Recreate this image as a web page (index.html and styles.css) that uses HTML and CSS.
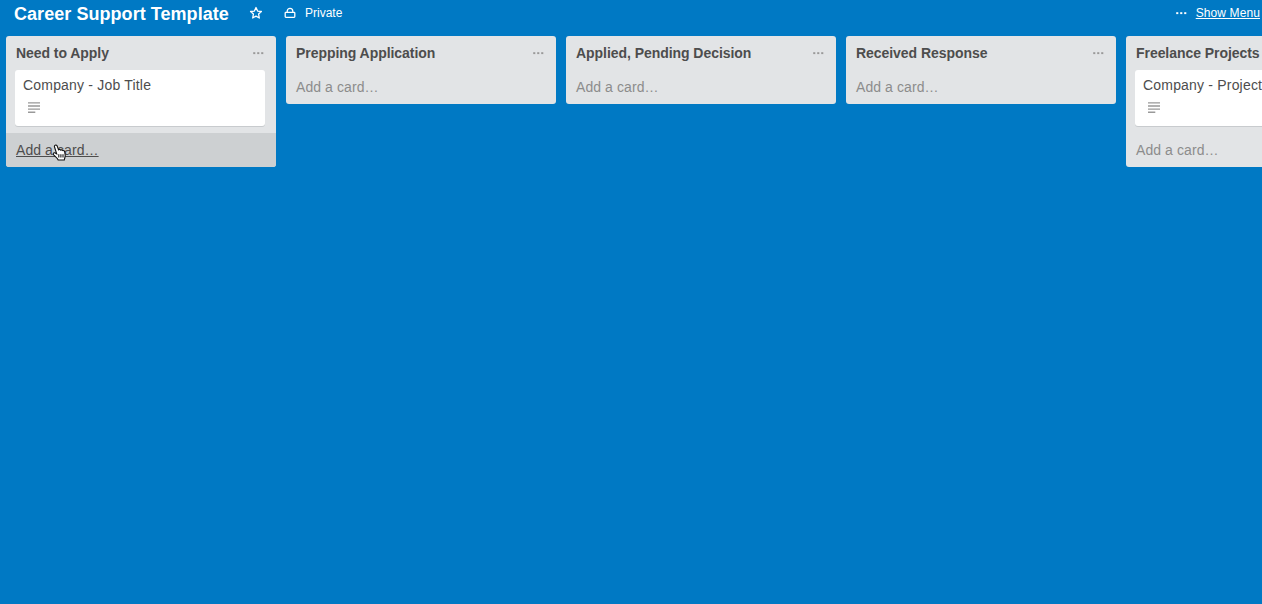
FILE: index.html
```html
<!DOCTYPE html>
<html lang="en">
<head>
<meta charset="utf-8">
<title>Career Support Template</title>
<link rel="stylesheet" href="styles.css">
</head>
<body>
<svg class="symbols" aria-hidden="true">
  <symbol id="dots" viewBox="0 0 11 3"><rect x="0.2" y="0.2" width="2.1" height="1.9"/><rect x="4.2" y="0.2" width="2.1" height="1.9"/><rect x="8.2" y="0.2" width="2.1" height="1.9"/></symbol>
  <symbol id="lines" viewBox="0 0 12 11"><path d="M0 .9H12M0 4H12M0 7.1H12M0 10.2H7.3" stroke="currentColor" stroke-width="1.4"/></symbol>
</svg>
<header class="board-header">
  <h1 class="board-title">Career Support Template</h1>
  <svg class="star" viewBox="0 0 14 14"><path d="M7 1.5 8.6 5.1 12.4 5.5 9.6 8.1 10.3 12 7 10.1 3.7 12 4.4 8.1 1.6 5.5 5.4 5.1Z"/></svg>
  <svg class="lock" viewBox="0 0 12 12"><rect x="1.2" y="5.3" width="9.6" height="5" rx=".7"/><path d="M3.2 5.1V4.2a2.8 2.9 0 0 1 5.6 0v.9"/></svg>
  <span class="privacy">Private</span>
  <svg class="dots menu-dots"><use href="#dots"/></svg>
  <a class="show-menu">Show Menu</a>
</header>
<main class="board">
  <section class="list">
    <div class="list-header"><h2 class="list-title">Need to Apply</h2><svg class="dots"><use href="#dots"/></svg></div>
    <div class="cards"><article class="card"><div class="card-title">Company - Job Title</div><svg class="description"><use href="#lines"/></svg></article></div>
    <a class="add-card hovered"><span class="add-label">Add a card…</span>
      <svg class="pointer" viewBox="0 0 15 18"><path d="M3.2 1.2C4.2.8 5 1.4 5.3 2.3L6.5 5.8C7.1 5.2 8.2 5.3 8.6 6.1 9.3 5.6 10.3 5.8 10.7 6.6 11.6 6.3 12.5 6.8 12.7 7.8L13.2 11.2C13.4 12.9 12.5 14.2 12.3 16H6.2C5.5 14 3.3 12.7 1.7 10.9.7 9.7 1.5 8.6 2.7 8.8L4.7 9.8 2.6 3.3C2.2 2.3 2.4 1.5 3.2 1.2Z"/><path d="M6.8 10.3V13.5M8.9 10.3V13.5M11 10.3V13.5"/></svg>
    </a>
  </section>
  <section class="list">
    <div class="list-header"><h2 class="list-title">Prepping Application</h2><svg class="dots"><use href="#dots"/></svg></div>
    <a class="add-card"><span class="add-label">Add a card…</span></a>
  </section>
  <section class="list">
    <div class="list-header"><h2 class="list-title">Applied, Pending Decision</h2><svg class="dots"><use href="#dots"/></svg></div>
    <a class="add-card"><span class="add-label">Add a card…</span></a>
  </section>
  <section class="list">
    <div class="list-header"><h2 class="list-title">Received Response</h2><svg class="dots"><use href="#dots"/></svg></div>
    <a class="add-card"><span class="add-label">Add a card…</span></a>
  </section>
  <section class="list">
    <div class="list-header"><h2 class="list-title">Freelance Projects</h2></div>
    <div class="cards"><article class="card"><div class="card-title">Company - Project</div><svg class="description"><use href="#lines"/></svg></article></div>
    <a class="add-card"><span class="add-label">Add a card…</span></a>
  </section>
</main>
</body>
</html>
```
FILE: styles.css
```css
* { box-sizing: border-box; }
body { margin: 0; height: 604px; overflow: hidden; background: #0079c4; color: #4d4d4d; font-family: "Liberation Sans", Arial, sans-serif; }
svg { display: block; flex: none; }
.symbols { position: absolute; width: 0; height: 0; }
.board-header { display: flex; align-items: center; height: 26px; margin-bottom: 10px; padding: 0 2px 0 14px; color: #fff; white-space: nowrap; }
.board-title { width: 215px; margin: 0 20px 0 0; padding-top: 2px; font-size: 18px; line-height: 26px; letter-spacing: .05px; }
.star { width: 14px; height: 14px; margin-right: 21px; fill: none; stroke: #fff; stroke-width: 1.3; stroke-linejoin: round; }
.lock { width: 12px; height: 12px; margin-right: 9px; fill: none; stroke: #fff; stroke-width: 1.3; }
.privacy, .show-menu { font-size: 12px; line-height: 26px; }
.dots { width: 11px; height: 3px; fill: #999; }
.menu-dots { margin: 0 9px 0 auto; fill: #fff; }
.show-menu { letter-spacing: .1px; text-decoration: underline; }
.board { display: flex; align-items: flex-start; gap: 10px; padding-left: 6px; overflow: hidden; }
.list { flex: none; width: 270px; overflow: hidden; border-radius: 3px; background: #e2e4e6; }
.list-header { display: flex; align-items: center; justify-content: space-between; height: 34px; padding: 0 11px 0 10px; }
.list-title { margin: 0; font-size: 14px; line-height: 34px; letter-spacing: -.05px; white-space: nowrap; }
.cards { height: 63px; padding: 0 11px 0 9px; }
.card { height: 56px; padding: 6px 8px; border-radius: 3px; background: #fff; box-shadow: 0 1px 0 #c8cbce; }
.card-title { font-size: 14px; line-height: 19px; letter-spacing: .19px; white-space: nowrap; }
.description { width: 12px; height: 11px; margin: 7px 0 0 5px; color: #999; }
.add-card { display: block; position: relative; height: 34px; padding-left: 10px; color: #8c8c8c; font-size: 14px; line-height: 34px; letter-spacing: .08px; }
.list-header .dots { margin-right: 1px; }
.hovered { background: #cdd0d2; color: #4d4d4d; text-decoration: underline; }
.pointer { position: absolute; left: 46px; top: 11px; width: 15px; height: 18px; fill: #fff; stroke: #111; stroke-width: 1.1; }
```
